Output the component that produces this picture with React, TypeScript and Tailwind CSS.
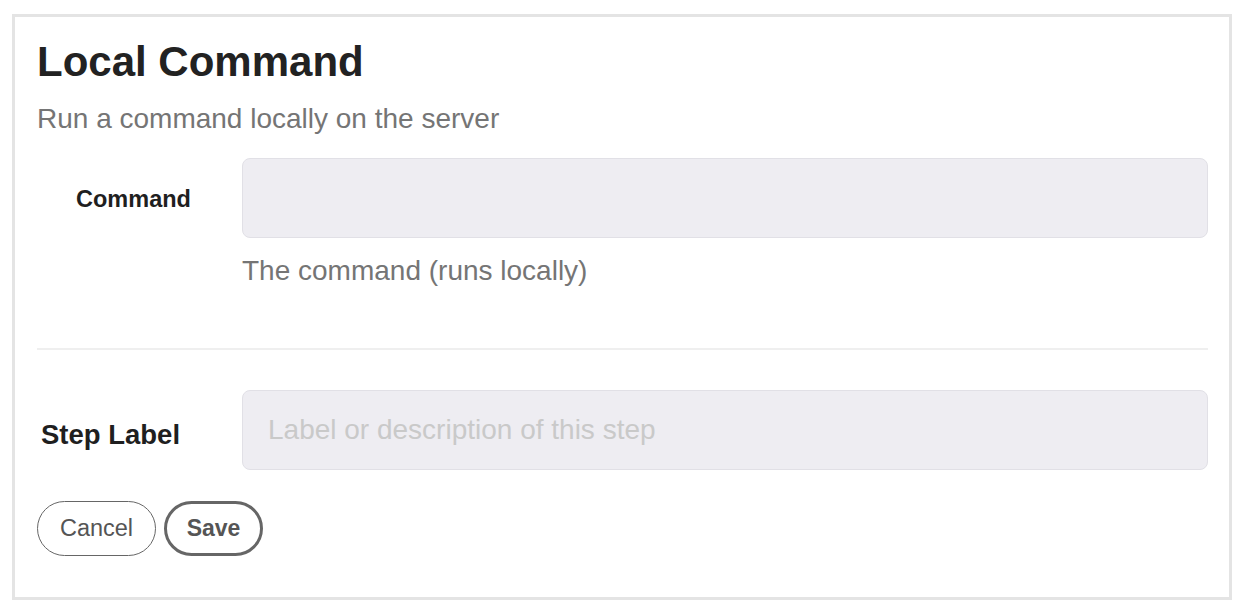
export default function App() {
  return (
    <div className="pl-[12px] pt-[14px] bg-white font-['Liberation_Sans',Arial,sans-serif]">
      <div className="w-[1220px] h-[586px] border-[3px] border-[#e4e4e4] pl-[22px] pr-[21px] pt-[21px]">
        <h1 className="text-[42px] leading-[48px] font-bold text-[#222]">Local Command</h1>
        <p className="mt-[17px] text-[28px] leading-[32px] text-[#757575]">
          Run a command locally on the server
        </p>

        <div className="mt-[23px] flex items-center gap-[12px]">
          <label className="w-[193px] pt-[4px] text-center text-[23.5px] font-bold text-[#1f1f1f]">
            Command
          </label>
          <input
            type="text"
            className="flex-1 h-[80px] rounded-[8px] bg-[#eeedf2] border border-[#e1e0e6] px-[25px] text-[28px] outline-none"
          />
        </div>
        <p className="ml-[205px] mt-[17px] text-[28px] leading-[32px] text-[#757575]">
          The command (runs locally)
        </p>

        <hr className="mt-[61px] border-0 h-[2px] bg-[#efefef]" />

        <div className="mt-[40px] flex items-center gap-[12px]">
          <label className="w-[193px] pl-[4px] pt-[10px] text-[27.5px] font-bold text-[#1f1f1f]">
            Step Label
          </label>
          <input
            type="text"
            placeholder="Label or description of this step"
            className="flex-1 h-[80px] rounded-[8px] bg-[#eeedf2] border border-[#e1e0e6] px-[25px] text-[28px] outline-none placeholder:text-[#c9c9c9]"
          />
        </div>

        <div className="mt-[31px] flex items-center gap-[8px]">
          <button className="h-[55px] w-[119px] rounded-full border-[1.5px] border-[#666] text-[23.5px] text-[#555]">
            Cancel
          </button>
          <button className="h-[55px] w-[99px] rounded-full border-[3px] border-[#666] text-[23px] font-bold text-[#555]">
            Save
          </button>
        </div>
      </div>
    </div>
  )
}
